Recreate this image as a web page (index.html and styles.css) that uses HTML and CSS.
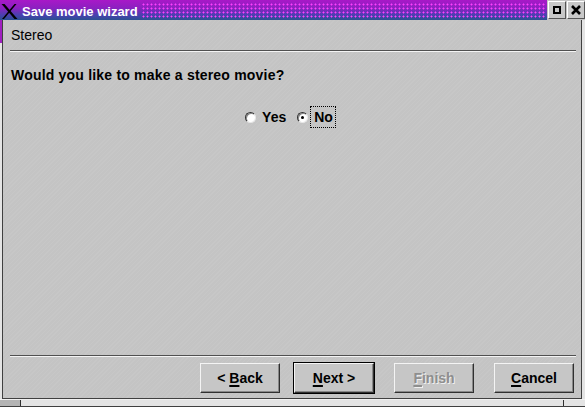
FILE: index.html
```html
<!DOCTYPE html>
<html>
<head>
<meta charset="utf-8">
<link rel="stylesheet" href="styles.css">
</head>
<body>
<div class="window">
  <div class="titlebar">
    <svg class="xlogo" width="17" height="15" viewBox="0 0 17 15">
      <path d="M0.5 0 L3.5 0 L16.5 15 L13.5 15 Z" fill="#000"/>
      <path d="M15.5 0 L13.5 0 L1 15 L3 15 Z" fill="#000"/>
    </svg>
    <span class="title">Save movie wizard</span>
    <div class="dots"></div>
    <div class="tbtns">
      <div class="tbtn"><span class="maxbox"></span></div>
      <div class="tbtn"><svg width="10" height="10" viewBox="0 0 10 10"><path d="M1 1 L9 9 M9 1 L1 9" stroke="#000" stroke-width="2.6"/></svg></div>
    </div>
  </div>
  <div class="frame">
    <div class="accent"></div>
    <div class="content">
      <div class="header">Stereo</div>
      <div class="sep"></div>
      <div class="question">Would you like to make a stereo movie?</div>
      <div class="radios">
        <label class="radio"><span class="dot"></span><span class="rlabel">Yes</span></label>
        <label class="radio"><span class="dot checked"></span><span class="rlabel focus">No</span></label>
      </div>
      <div class="spacer"></div>
      <div class="sep"></div>
      <div class="buttons">
        <button class="btn back">&lt; <u>B</u>ack</button>
        <button class="btn default"><u>N</u>ext &gt;</button>
        <button class="btn disabled"><u>F</u>inish</button>
        <button class="btn"><u>C</u>ancel</button>
      </div>
    </div>
  </div>
  <div class="bottombar">
    <div class="bcorner"></div>
    <div class="bmid"></div>
    <div class="bcorner right"></div>
  </div>
</div>
</body>
</html>
```
FILE: styles.css
```css
html, body {
  margin: 0;
  padding: 0;
  background: #c6c6c6;
}
body {
  width: 585px;
  height: 407px;
  overflow: hidden;
  font-family: "Liberation Sans", Arial, sans-serif;
}
.window {
  width: 585px;
  height: 407px;
  display: flex;
  flex-direction: column;
  background: #c4c4c4;
}
.titlebar {
  height: 20px;
  display: flex;
  align-items: flex-start;
  background: linear-gradient(#a818c8 0%, #8c20c0 40%, #4a40b0 75%, #2a5090 100%);
  flex-shrink: 0;
}
.xlogo {
  margin: 4px 4px 0 1px;
}
.title {
  color: #fff;
  font-weight: bold;
  font-size: 13px;
  line-height: 15px;
  margin-top: 4px;
}
.dots {
  flex: 1;
  height: 16px;
  margin-top: 2px;
  margin-left: 4px;
  margin-right: 2px;
  background-image: radial-gradient(circle at 1.5px 1.5px, #ff40ff 0.9px, transparent 1.1px);
  background-size: 4px 4px;
  background-position: 0 1px;
}
.tbtns {
  display: flex;
  gap: 1px;
  height: 20px;
  padding: 1px 0 0 1px;
  box-sizing: border-box;
  background: #c4c4c4;
}
.tbtn {
  width: 16px;
  height: 16px;
  background: #c8c8c8;
  border: 1px solid;
  border-color: #fff #555 #555 #fff;
  display: flex;
  align-items: center;
  justify-content: center;
}
.maxbox {
  width: 4px;
  height: 4px;
  border: 2px solid #000;
}
.frame {
  flex: 1;
  display: flex;
  border-left: 2px solid #e4e4e4;
  border-right: 3px solid #e4e4e4;
  position: relative;
}
.accent {
  position: absolute;
  left: -2px;
  top: 0;
  width: 2px;
  height: 23px;
  background: #a020c0;
}
.content {
  flex: 1;
  display: flex;
  flex-direction: column;
  border-left: 1px solid #404040;
  border-right: 1px solid #404040;
  border-bottom: 1px solid #404040;
  padding: 0 7px 0 8px;
  background-color: #c4c4c4;
  background-image: repeating-linear-gradient(135deg, rgba(255,255,255,0.05) 0 1px, transparent 1px 3px);
}
.header {
  font-size: 14px;
  height: 30px;
  line-height: 30px;
  color: #000;
}
.sep {
  height: 1px;
  background: #505050;
  border-bottom: 1px solid #f4f4f4;
  margin-left: -1px;
  margin-right: -2px;
  flex-shrink: 0;
}
.question {
  font-weight: bold;
  font-size: 14px;
  margin-top: 15px;
  height: 16px;
  line-height: 16px;
  letter-spacing: 0.2px;
}
.radios {
  display: flex;
  justify-content: center;
  margin-top: 23px;
  gap: 8px;
  padding-right: 4px;
}
.radio {
  display: flex;
  align-items: center;
  height: 22px;
}
.dot {
  width: 11px;
  height: 11px;
  border-radius: 50%;
  background: #fff;
  box-sizing: border-box;
  border: 1px solid;
  border-color: #303030 #e8e8e8 #e8e8e8 #303030;
  box-shadow: inset 1px 1px 0 #888;
  position: relative;
}
.dot.checked::after {
  content: "";
  position: absolute;
  left: 3px;
  top: 3px;
  width: 3px;
  height: 3px;
  background: #000;
  border-radius: 50%;
}
.rlabel {
  font-weight: bold;
  font-size: 14px;
  line-height: 16px;
  margin-left: 2px;
  padding: 2px 2px 2px 3px;
  border: 1px solid transparent;
}
.rlabel.focus {
  border: 1px dotted #000;
}
.spacer {
  flex: 1;
}
.buttons {
  display: flex;
  justify-content: flex-end;
  padding: 6px 0 5px;
  flex-shrink: 0;
}
.btn {
  width: 80px;
  height: 30px;
  margin-left: 20px;
  font-family: "Liberation Sans", Arial, sans-serif;
  font-weight: bold;
  font-size: 14px;
  background: #c6c6c6;
  color: #000;
  border: 1px solid;
  border-color: #f4f4f4 #303030 #303030 #f4f4f4;
  box-shadow: inset -1px -1px 0 #888;
  padding: 0;
}
.btn u {
  text-decoration-thickness: 2px;
  text-underline-offset: 2px;
}
.btn.default {
  outline: 1px solid #000;
  margin-left: 14px;
}
.btn.disabled {
  color: #8e8e8e;
  text-shadow: 1px 1px 0 #f0f0f0;
}
.bottombar {
  height: 6px;
  display: flex;
  flex-shrink: 0;
  border-top: 1px solid #f0f0f0;
  border-bottom: 1px solid #404040;
}
.bcorner {
  width: 20px;
  background: #b4b4b4;
  border-right: 1px solid #303030;
}
.bcorner.right {
  border-right: none;
  border-left: 1px solid #303030;
  width: 21px;
  background: #e4e4e4;
}
.bmid {
  flex: 1;
  background: #e4e4e4;
}
```
